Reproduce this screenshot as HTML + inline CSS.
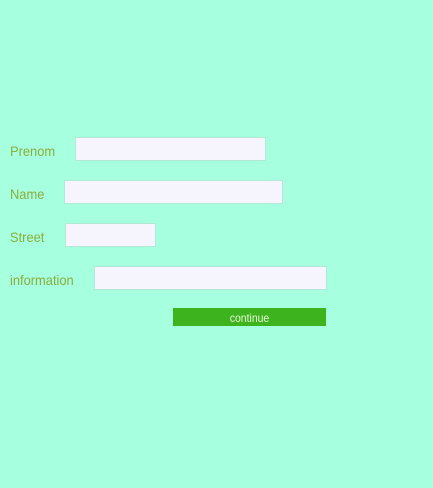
<!DOCTYPE html>
<html><head><style>
html,body{margin:0;padding:0;width:433px;height:488px;background:#a6ffde;overflow:hidden;font-family:"Liberation Sans",sans-serif;}
.l{position:absolute;left:10px;font-size:14px;color:#8aae3c;line-height:16px;transform:scaleX(0.92);transform-origin:0 0;}
.i{position:absolute;box-sizing:border-box;background:#f6f4fd;border:1px solid #b4e8d6;height:24px;}
.b{position:absolute;left:173px;top:308px;width:153px;height:18px;background:#3db41e;}
.b span{position:absolute;left:0;right:0;top:3px;text-align:center;color:#e6f5d8;font-size:12px;line-height:14px;transform:scaleX(0.87);}
</style></head><body>
<div class="l" style="top:143px">Prenom</div><div class="i" style="left:75px;top:137px;width:191px"></div>
<div class="l" style="top:186px">Name</div><div class="i" style="left:64px;top:180px;width:219px"></div>
<div class="l" style="top:229px">Street</div><div class="i" style="left:65px;top:223px;width:91px"></div>
<div class="l" style="top:272px">information</div><div class="i" style="left:94px;top:266px;width:233px"></div>
<div class="b"><span>continue</span></div>
</body></html>
